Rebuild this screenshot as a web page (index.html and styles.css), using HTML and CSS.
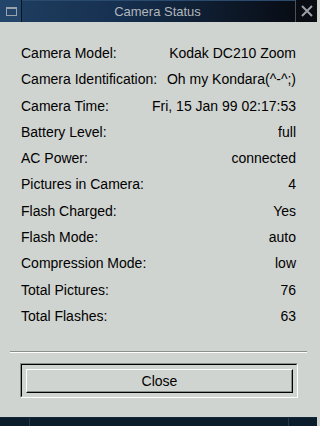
FILE: index.html
```html
<!DOCTYPE html>
<html>
<head>
<meta charset="utf-8">
<link rel="stylesheet" href="styles.css">
</head>
<body>
<div class="window">
  <div class="titlebar">
    <div class="tb-menu">
      <svg width="22" height="22" viewBox="0 0 22 22"><rect x="6.5" y="7.5" width="10" height="8" fill="none" stroke="#9aa2ac" stroke-width="1"/><rect x="6" y="7" width="11" height="2" fill="#9aa2ac"/></svg>
    </div>
    <div class="tb-title">Camera Status</div>
    <div class="tb-close">
      <svg width="22" height="22" viewBox="0 0 22 22"><path d="M6 6 L16 16 M16 6 L6 16" stroke="#9ca0a6" stroke-width="2" fill="none"/></svg>
    </div>
  </div>
  <div class="content">
    <div class="rows">
      <div class="row"><span>Camera Model:</span><span>Kodak DC210 Zoom</span></div>
      <div class="row"><span>Camera Identification:</span><span>Oh my Kondara(^-^;)</span></div>
      <div class="row"><span>Camera Time:</span><span>Fri, 15 Jan 99 02:17:53</span></div>
      <div class="row"><span>Battery Level:</span><span>full</span></div>
      <div class="row"><span>AC Power:</span><span>connected</span></div>
      <div class="row"><span>Pictures in Camera:</span><span>4</span></div>
      <div class="row"><span>Flash Charged:</span><span>Yes</span></div>
      <div class="row"><span>Flash Mode:</span><span>auto</span></div>
      <div class="row"><span>Compression Mode:</span><span>low</span></div>
      <div class="row"><span>Total Pictures:</span><span>76</span></div>
      <div class="row"><span>Total Flashes:</span><span>63</span></div>
    </div>
    <div class="separator"></div>
    <div class="frame">
      <div class="frame-inner">
        <button class="btn">Close</button>
      </div>
    </div>
  </div>
  <div class="bottombar">
    <div class="bb-seg bb-left"></div>
    <div class="bb-seg bb-mid"></div>
    <div class="bb-seg bb-right"></div>
  </div>
</div>
</body>
</html>
```

FILE: styles.css
```css
html, body {
  margin: 0;
  padding: 0;
  background: #d0d4d0;
}
.window {
  width: 317px;
  height: 426px;
  display: flex;
  flex-direction: column;
  background: #d0d4d0;
  font-family: "Liberation Sans", Arial, sans-serif;
  overflow: hidden;
}
.titlebar {
  height: 22px;
  display: flex;
  flex-shrink: 0;
  background: #05090e;
}
.tb-menu {
  width: 22px;
  height: 22px;
  background: #24456a;
  border-right: 1px solid #0a1522;
  box-sizing: border-box;
}
.tb-menu svg, .tb-close svg { display: block; }
.tb-title {
  flex: 1;
  height: 22px;
  line-height: 22px;
  text-align: center;
  color: #b2b6bb;
  font-size: 13px;
  background: linear-gradient(to right, #1e3c5e 0%, #163050 35%, #0e1c2e 70%, #080c14 100%);
  border-top: 1px solid #2a4a6e;
  box-sizing: border-box;
  padding-right: 2px;
}
.tb-close {
  width: 22px;
  height: 22px;
  background: #090d13;
  border-left: 1px solid #4a525a;
  box-sizing: border-box;
}
.content {
  flex: 1;
  padding: 18px 10px 0 10px;
  display: flex;
  flex-direction: column;
}
.rows {
  padding: 0 11px;
}
.row {
  display: flex;
  justify-content: space-between;
  height: 26.3px;
  line-height: 26.3px;
  font-size: 14px;
  color: #000;
  white-space: nowrap;
}
.separator {
  margin-top: 21.7px;
  height: 1px;
  background: #8c908c;
  border-bottom: 1px solid #ffffff;
}
.frame {
  margin-top: 10px;
  margin-left: 10px;
  width: 278px;
  box-sizing: border-box;
  border-top: 1px solid #8c908c;
  border-left: 1px solid #8c908c;
  border-bottom: 1px solid #ffffff;
  border-right: 1px solid #ffffff;
}
.frame-inner {
  border-top: 1px solid #000;
  border-left: 1px solid #000;
  border-bottom: 1px solid #d0d4d0;
  border-right: 1px solid #d0d4d0;
  padding: 4px 3px 3px 4px;
}
.btn {
  display: block;
  width: 267px;
  height: 24px;
  box-sizing: border-box;
  margin: 0;
  padding: 0;
  background: #d0d4d0;
  border-style: solid;
  border-width: 1px;
  border-color: #ffffff #000000 #000000 #ffffff;
  box-shadow: inset -1px -1px 0 #8c908c;
  font-family: "Liberation Sans", Arial, sans-serif;
  font-size: 14px;
  color: #000;
  line-height: 20px;
}
.bottombar {
  height: 9px;
  flex-shrink: 0;
  display: flex;
  background: #0b1d2a;
  border-top: 1px solid #13283a;
  box-sizing: border-box;
}
.bb-left { width: 29px; border-right: 1px solid #22384a; }
.bb-mid { flex: 1; border-right: 1px solid #22384a; }
.bb-right { width: 28px; }
```
